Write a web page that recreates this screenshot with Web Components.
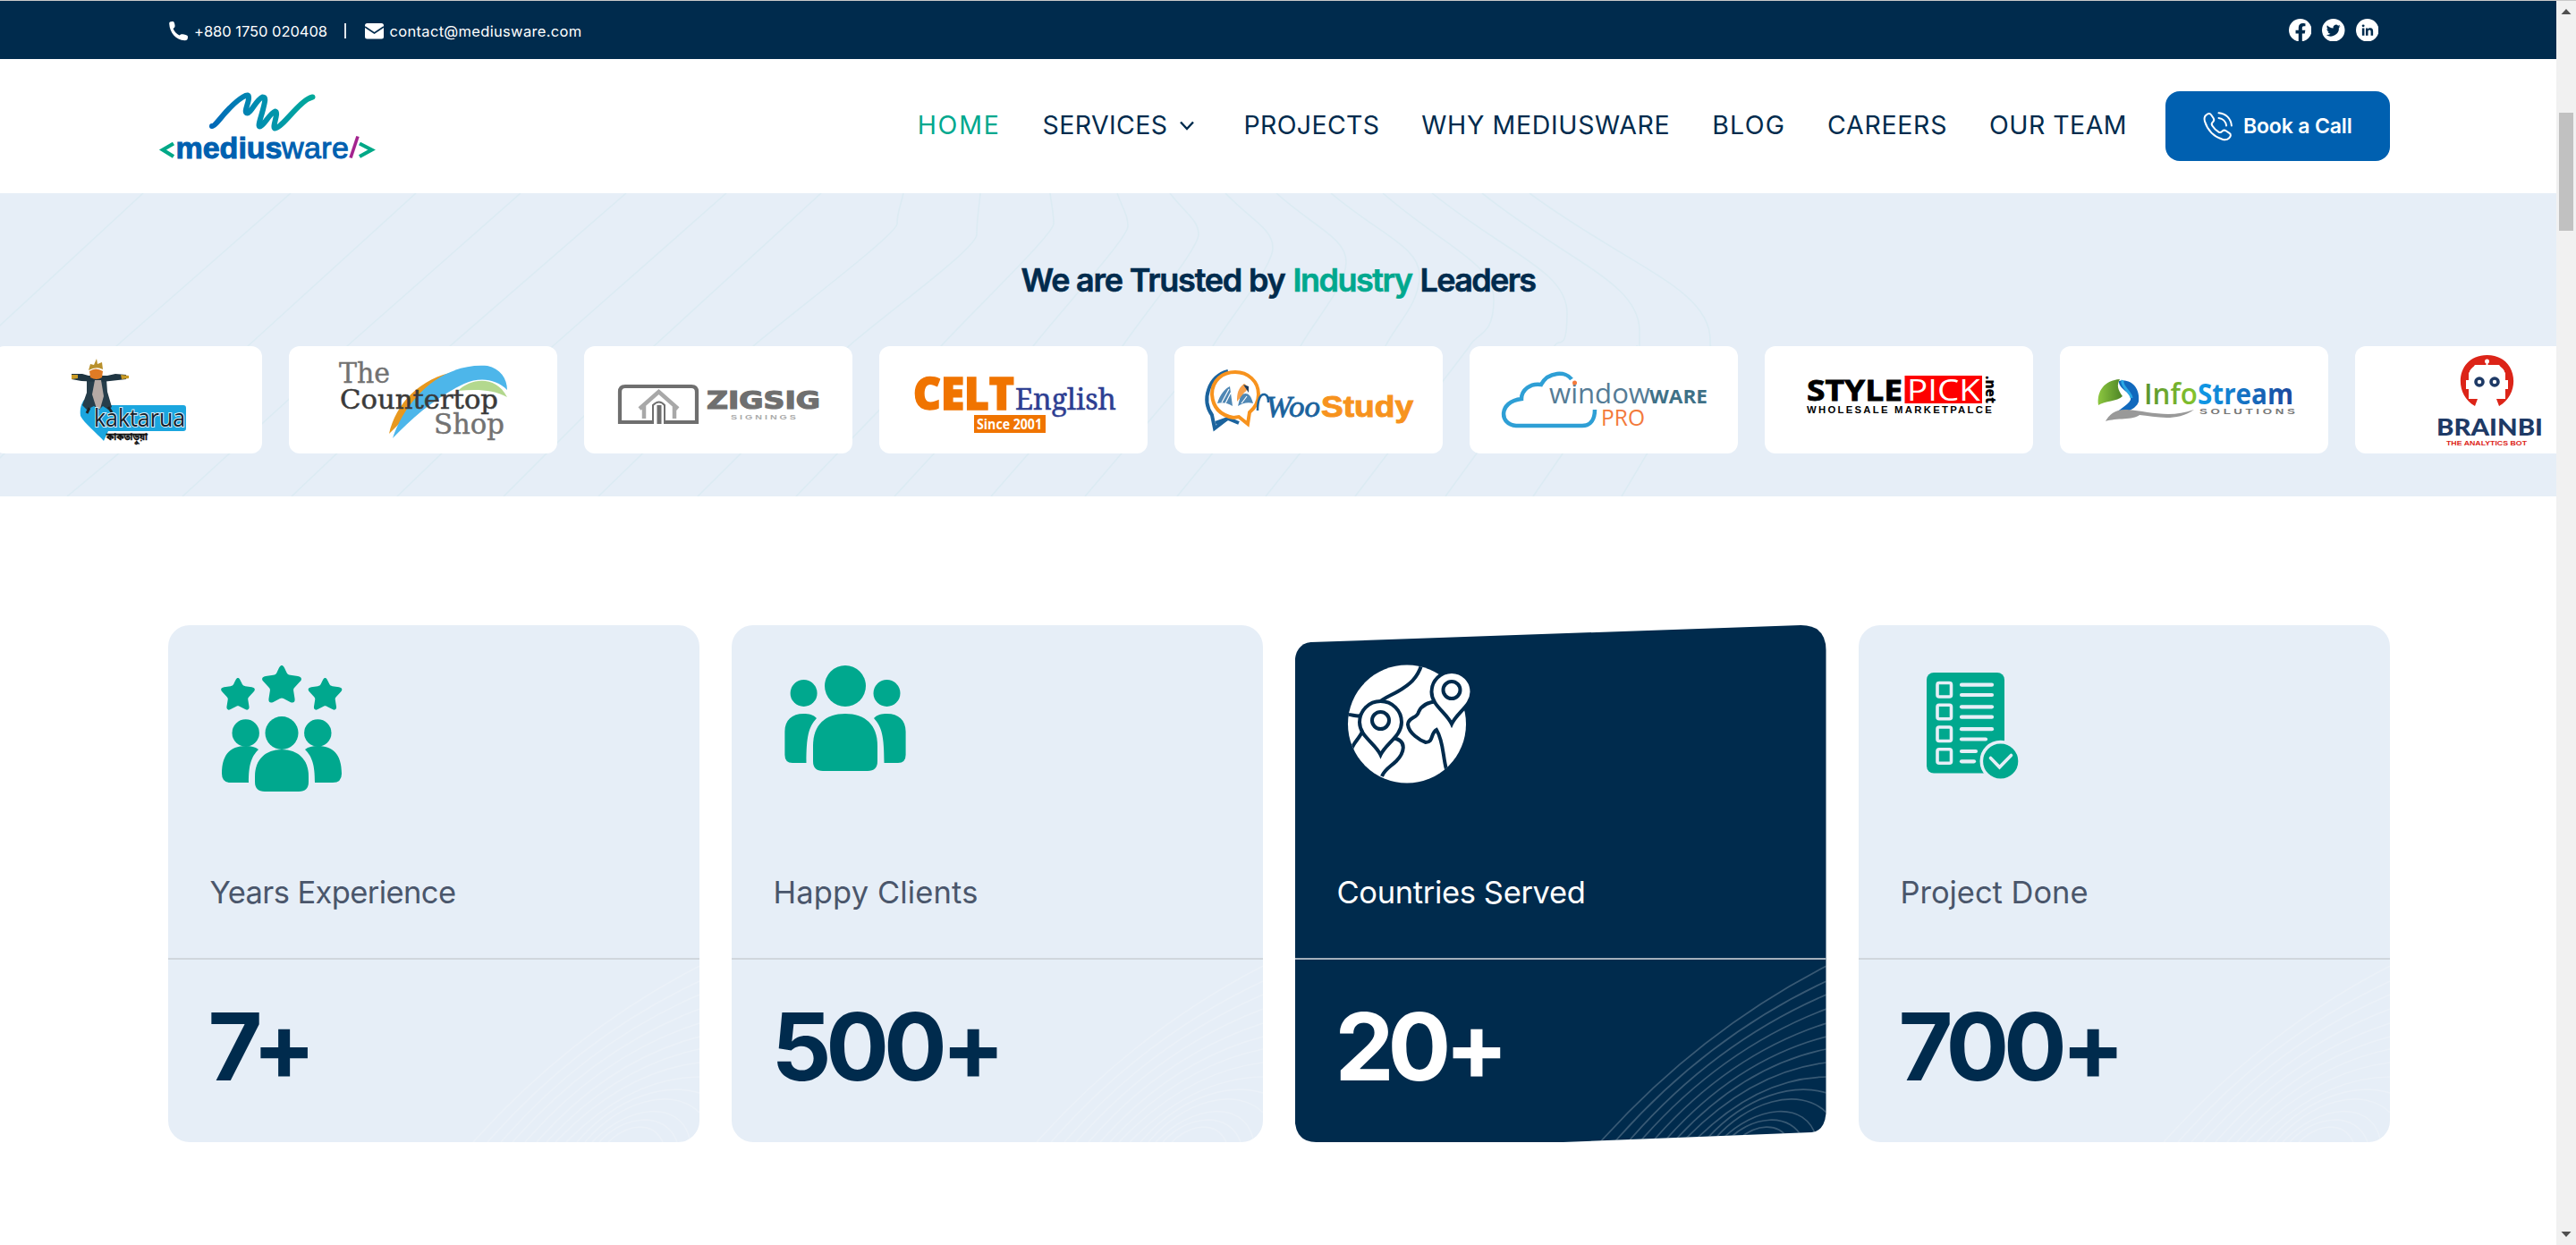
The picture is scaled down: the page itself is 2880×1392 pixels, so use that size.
<!DOCTYPE html>
<html lang="en">
<head>
<meta charset="utf-8">
<title>Mediusware</title>
<style>
html,body{margin:0;background:#fff}
body{width:2880px;height:1392px;overflow:hidden;font-family:Inter,"Liberation Sans",sans-serif;color:#002b4d}
</style>
</head>
<body>
<app-shell>
  <top-bar></top-bar>
  <site-header></site-header>
  <trusted-band></trusted-band>
  <stats-row>
    <stat-card label="Years Experience" label-width="275" value="7+" value-width="109" icon="years"></stat-card>
    <stat-card label="Happy Clients" label-width="229" value="500+" value-width="255" icon="clients"></stat-card>
    <stat-card label="Countries Served" label-width="278" value="20+" value-width="187" icon="globe" active></stat-card>
    <stat-card label="Project Done" label-width="210" value="700+" value-width="247" icon="project"></stat-card>
  </stats-row>
</app-shell>
<script>
const make = (name, html, after) => customElements.define(name, class extends HTMLElement {
  connectedCallback() {
    if (this.shadowRoot) return;
    this.attachShadow({mode: 'open'}).innerHTML = typeof html === 'function' ? html(this) : html;
    if (after) after(this);
  }
});

make('app-shell', `<style>
:host{display:flex;width:2880px;height:1392px;overflow:hidden}
main{width:2858px;flex:none;display:flex;flex-direction:column;overflow:hidden}
</style><main><slot></slot></main><scroll-bar></scroll-bar>`);

make('scroll-bar', `<style>
:host{display:flex;flex-direction:column;align-items:center;width:22px;flex:none;background:#f1f1f1;border-top:1px solid #c9c9c9;box-sizing:border-box}
svg{display:block;flex:none}
.thumb{width:16px;height:132px;background:#c1c1c1;margin-top:103px}
.grow{flex:1}
</style><svg width="22" height="22"><path d="M5.500 15l5.500-6 5.500 6z" fill="#505050"/></svg>
<div class="thumb"></div><div class="grow"></div>
<svg width="22" height="22"><path d="M5.500 7l5.500 6 5.500-6z" fill="#505050"/></svg>`);

make('top-bar', `<style>
:host{display:flex;height:66px;flex:none;box-sizing:border-box;border-top:1px solid #c9c9c9;background:#002b4d;color:#fff;align-items:center;padding:2px 199px 0 188px;font-size:16.5px;line-height:20px}
.sep{width:1.500px;height:17px;background:#dfe5ea;margin:0 21px 0 19px}
.phone{margin-right:6px}.mail{margin-right:7px}
.social{margin-left:auto;display:flex;gap:12px;margin-top:-2px}
svg{display:block;flex:none}
</style>
<svg class="phone" width="23" height="23" viewBox="0 0 23 23"><path d="M1.200 3.500C1 1.300 3 .8 5.300 1c1.100.1 1.500 1 2 3 .6 2.500.4 3.600-1.700 4.900C6.800 12 9 14.600 12.600 16.600c1.800-1.700 2.700-1.700 5.200-1 2.800.7 4 .9 4.200 2.300.2 2.600-.8 4.300-3.500 4.300C8.500 22 1.800 13.500 1.200 3.500z" fill="#fff"/></svg>
<fit-text w="149">+880 1750 020408</fit-text>
<span class="sep"></span>
<svg class="mail" width="21" height="18" viewBox="0 0 21 18"><rect width="21" height="17.500" rx="2.500" fill="#fff"/><path d="M0 4l10.500 7L21 4" fill="none" stroke="#002b4d" stroke-width="1.700"/></svg>
<fit-text w="215">contact@mediusware.com</fit-text>
<div class="social">
<svg width="25.500" height="25.500" viewBox="0 0 26 26"><circle cx="13" cy="13" r="13" fill="#fff"/><path d="M11 26v-9.200H7.700V13H11v-2.900c0-3.300 2-5.100 4.900-5.100 1.400 0 2.900.3 2.900.3v3.200h-1.600c-1.600 0-2.100 1-2.100 2V13h3.600l-.6 3.800h-3V26z" fill="#002b4d"/></svg>
<svg width="25.500" height="25.500" viewBox="0 0 26 26"><circle cx="13" cy="13" r="13" fill="#fff"/><path d="M21 8.300c-.6.3-1.200.4-1.900.5.700-.4 1.200-1 1.400-1.800-.6.400-1.300.6-2.100.8a3.300 3.300 0 0 0-5.600 3C10 10.700 7.600 9.400 6 7.400c-.9 1.500-.4 3.400 1 4.400-.5 0-1-.2-1.500-.4 0 1.600 1.100 3 2.600 3.300-.5.100-1 .1-1.500 0 .4 1.300 1.600 2.200 3.100 2.300A6.600 6.600 0 0 1 4.900 18.400 9.300 9.300 0 0 0 19.300 10.100c.7-.5 1.200-1.100 1.700-1.800z" fill="#002b4d"/></svg>
<svg width="25.500" height="25.500" viewBox="0 0 26 26"><circle cx="13" cy="13" r="13" fill="#fff"/><path d="M7 10.700h2.600V19H7zM11.200 10.700h2.500v1.200c.5-.9 1.400-1.400 2.600-1.400 2.400 0 3.200 1.500 3.200 3.800V19h-2.600v-4.200c0-1.200-.3-2.100-1.500-2.100s-1.600.9-1.600 2.100V19h-2.600z" fill="#002b4d"/><circle cx="8.300" cy="8" r="1.500" fill="#002b4d"/></svg>
</div>`);

make('site-header', `<style>
:host{display:flex;height:150px;flex:none;align-items:center;padding:0 186.500px 0 176px;background:#fff}
nav{display:flex;margin-left:auto;align-items:center;gap:46.900px;font-size:28.500px;line-height:36px;padding-bottom:3px}
.home{color:#00a88e}
.srv{display:flex;align-items:center;gap:12px;padding-right:8px}
svg{display:block;flex:none}
call-button{margin-left:43px}
</style>
<svg width="246" height="90" viewBox="175.500 95.500 246 90">
<defs><linearGradient id="g" x1="236" x2="352" y1="0" y2="0" gradientUnits="userSpaceOnUse"><stop offset="0" stop-color="#0068b8"/><stop offset=".45" stop-color="#008eb0"/><stop offset="1" stop-color="#00aa9a"/></linearGradient></defs>
<path d="M236.500 140.500C241 141 254 118 271 108c5-3 7-3 6.500 2-.5 6-6 16-1.500 16 4 0 10-15 17-18 4 0 3 4 1 12-2 9-7 21-4 21 4 0 11-15 17-17 5 1-4 18 0 19 7 0 26-28 37-33 3-1.500 5-2 5-2" fill="none" stroke="url(#g)" stroke-width="6" stroke-linecap="round" stroke-linejoin="round"/>
<path d="M193.500 160l-12 7 12 7.500M401.500 160l13.500 7-13.500 7.500" fill="none" stroke="#00a887" stroke-width="4.200"/>
<path d="M399.500 152l-8 24" stroke="#a3238e" stroke-width="3.600"/>
<text x="196" y="176" font-family="Liberation Sans" font-size="34" font-weight="700" fill="#0060b0" stroke="#0060b0" stroke-width="1" textLength="119">medius</text>
<text x="314.500" y="176" font-family="Liberation Sans" font-size="34" fill="#0060b0" stroke="#0060b0" stroke-width="1" textLength="75">ware</text>
</svg>
<nav>
<fit-text class="home" w="93">HOME</fit-text>
<span class="srv"><fit-text w="140">SERVICES</fit-text><svg width="18" height="14" viewBox="0 0 18 14"><path d="M2 3.500l7 7.500 7-7.500" fill="none" stroke="#002b4d" stroke-width="2.400"/></svg></span>
<fit-text w="152">PROJECTS</fit-text>
<fit-text w="278">WHY MEDIUSWARE</fit-text>
<fit-text w="82">BLOG</fit-text>
<fit-text w="134">CAREERS</fit-text>
<fit-text w="154">OUR TEAM</fit-text>
</nav>
<call-button>Book a Call</call-button>`);

make('call-button', `<style>
:host{display:flex;width:250.500px;height:78px;flex:none;box-sizing:border-box;border-radius:16px;background:#0060b0;color:#fff;align-items:center;padding:0 0 0 41px;gap:11px;font-size:23px;font-weight:600;line-height:30px}
svg{display:block;flex:none}
fit-text{padding-bottom:1px}
</style><svg width="35" height="35" viewBox="0 0 35 35" fill="none" stroke="#fff" stroke-width="2" stroke-linecap="round" stroke-linejoin="round"><path d="M4.300 4.800C6.300 2.600 8.700 2.200 10 4.300l2.700 4c1 1.700.6 3-.8 4.200-1.600 1.300-1.700 2.200-.6 4 1.900 3 4.300 5.300 7.200 7.100 1.700 1 2.500.8 3.800-.7 1.200-1.500 2.600-1.700 4.300-.7l3.900 2.700c2.200 1.500 1.600 3.600-.5 5.600-1.800 1.800-4 2.300-6.800 1.500C13.500 29 6 21.400 2.900 11.500c-.8-2.700-.3-5 1.400-6.700z"/><path d="M18.500 2.200c8 .6 13.800 6.400 14.400 14.300M18.500 8c4.600.6 8 4 8.600 8.500"/></svg>
<fit-text w="121.500"><slot></slot></fit-text>`);

// Contour line data: top x, bulge x, bulge y, x at y=387, x at y=555
const lines = [[160,0,0,-25,-210],[325,0,0,130,-45],[465,0,0,277,75],[582,0,0,388,204],[700,0,0,503,326],[812,0,0,618,444],[918,0,0,731,563],
[1010,1003,250,842,669],[1096,1092,262,949,780],[1174,1178,250,1052,890],[1249,1261,253,1155,1000],[1308,1340,262,1255,1108],[1370,1423,277,1356,1213],
[1427,1505,293,1454,1316],[1488,1587,308,1549,1415],[1546,1670,335,1643,1515],[1601,1752,350,1738,1616],[1657,1833,370,1830,1714],[1710,1912,380,1913,1813]];
const contours = lines.map(([t,bx,by,m,e]) => bx
  ? `M${t} 216C${t+(bx-t)*.55} ${216+(by-216)*.5} ${bx} ${by-(by-216)*.35} ${bx} ${by}S${m+(bx-m)*.3} ${387-(387-by)*.3} ${m} 387L${e} 555`
  : `M${t} 216L${m} 387L${e} 555`).join('');

make('trusted-band', `<style>
:host{display:grid;height:339px;flex:none;background:#e6eef7;overflow:hidden}
.bg,.content{grid-area:1/1;min-width:0}
.bg{display:block}
.content{display:flex;flex-direction:column;align-items:center}
h2{margin:73px 0 0;font-size:36px;line-height:48px;font-weight:600;display:flex;gap:9px;-webkit-text-stroke:.6px}
h2 .g{color:#00a88e}
.track{display:flex;gap:30px;width:2858px;margin-top:50px;overflow:hidden}
.track logo-tile:first-child{margin-left:-7px}
</style>
<svg class="bg" width="2858" height="339" viewBox="0 216 2858 339"><path d="${contours}" fill="none" stroke="#dcebf3" stroke-width="1.600"/></svg>
<div class="content">
<h2><fit-text w="295">We are Trusted by</fit-text><fit-text class="g" w="133">Industry</fit-text><fit-text w="129">Leaders</fit-text></h2>
<div class="track">${['kaktarua','countertop','zigsig','celt','woo','windoware','stylepick','infostream','brainbi'].map(n=>`<logo-tile name="${n}"></logo-tile>`).join('')}</div>
</div>`);

const T = (x,y,w,size,fill,text,extra='') => `<text x="${x}" y="${y}" textLength="${w}" lengthAdjust="spacingAndGlyphs" font-size="${size}" fill="${fill}" ${extra}>${text}</text>`;
const logos = {
kaktarua: `<path d="M101 60c4 3 14 6 28 6h83q3 0 3 3v23q0 3-3 3h-84l-5 11c-7-8-22-20-26-28-1-8 1-14 4-18z" fill="#1ba6df"/>
<path d="M104 37h22l1 14 5 17-4 3-6-4-4 4-6-4-8 4-5-5 5-14z" fill="#263d4a"/><path d="M87 31h12l7 2h21l9-2 12 1v5l-18 2-10 1-22-1-11-2z" fill="#1f3542"/><path d="M87 32h7v4l-7 1zM142 32l9 1v3l-8 1z" fill="#c99a25"/><path d="M113 38h7l3 18-4 14h-4l-5-16z" fill="#b5aaa5"/><path d="M107 28q7-5 15 0l-1 7q-6 4-13 0z" fill="#e07b25"/><path d="M106 27l2-7 4 1 3-7 1 6 5-2 1 8q-7-4-16 1z" fill="#b8902c"/><path d="M107 69l-3 6M128 68l4 6" stroke="#222" stroke-width="3"/>
${T(112,90,102,27,'#14202b','kaktarua','font-family="Open Sans" font-weight="500" stroke="#d8eef8" stroke-width="2" paint-order="stroke"')}
${T(126,105,46,11.5,'#111','কাকতাড়ুয়া','font-weight="700" font-family="Noto Sans Bengali,Noto Sans,sans-serif" stroke="#111" stroke-width=".4"')}`,
countertop: `<path d="M112 98C120 62 150 32 195 27 162 45 138 72 112 98z" fill="#e8981e"/><path d="M116 103C130 60 170 18 222 22c14 3 22 14 22 27-12-12-30-15-48-7-30 14-58 38-80 61z" fill="#4db6ea"/><path d="M189 50c14-14 42-18 55 7-16-9-36-9-55-7z" fill="#b3d88e"/>
${T(56,41,57,31,'#727272','The','font-family="DejaVu Serif Condensed,DejaVu Serif" stroke="#727272" stroke-width=".4"')}${T(57,70,177,30,'#3a3a3a','Countertop','font-family="DejaVu Serif Condensed,DejaVu Serif" stroke="#3a3a3a" stroke-width=".5"')}${T(162,98,79,31,'#727272','Shop','font-family="DejaVu Serif Condensed,DejaVu Serif" stroke="#727272" stroke-width=".4"')}`,
zigsig: `<path d="M76 85H40V51q0-6 6-6h74q6 0 6 6v34H91" fill="none" stroke="#6f6f6f" stroke-width="4.200"/><path d="M84 87V66" stroke="#6f6f6f" stroke-width="5"/><path d="M77 87V66q7-7 13 0v21" fill="none" stroke="#6f6f6f" stroke-width="2"/><path d="M62 70l21.500-19L105 70M67 66v15M101 66v15" fill="none" stroke="#a8a8a8" stroke-width="4.500"/>
${T(137,70,127,26,'#6f6f6f','ZIGSIG','font-family="DejaVu Sans" font-weight="700" stroke="#6f6f6f" stroke-width="1.200"')}${T(164,82,73,8,'#aaa','S I G N I N G S','font-family="Liberation Sans" font-weight="700"')}`,
celt: `${T(38,70.500,113,49,'#f07400','CELT','font-family="Open Sans" font-weight="800" stroke="#f07400" stroke-width="1.500"')}${T(152,71,113,32,'#2d3e92','English','font-family="Noto Serif,DejaVu Serif,Liberation Serif" stroke="#2d3e92" stroke-width=".5"')}<rect x="106" y="77" width="80" height="20" fill="#f07400"/>${T(109,93,73,16,'#fff','Since 2001','font-family="Open Sans" font-weight="700"')}`,
woo: `<path d="M60 28C38 34 30 60 42 77L45 92 58 82" fill="none" stroke="#1b639d" stroke-width="4"/><path d="M46 86l14-5 12 5" fill="none" stroke="#1b639d" stroke-width="4"/><path d="M66 80C50 77 43 68 42 54 42 38 54 29 68 29S94 39 94 54c0 9-4 15-10 20l-2 13-10-8z" fill="none" stroke="#f7931e" stroke-width="4"/><path d="M48 64c6-2 12 0 17 3l-3-22c-6 3-11 9-14 19zM88 64c-6-2-12 0-17 3l3-12c6-4 11-3 14 9z" fill="#4f87b4"/><path d="M53 63l8-15M57 64l6-12M75 64l6-8" stroke="#fff" stroke-width="1.200"/><path d="M70 62c0-9 1-15 8-20 5 2 4 8 0 10z" fill="#f7a04a"/><path d="M77 43l6 2v7z" fill="#1d3b5c"/><path d="M93 72c0-12 3-19 8-18 4 1 4 5 4 9" fill="none" stroke="#1b639d" stroke-width="2.500"/>
${T(102,79,61,34,'#1b639d','Woo','font-family="Liberation Serif" font-style="italic" stroke="#1b639d" stroke-width=".8"')}${T(164,79,103,33,'#f7931e','Study','font-family="Liberation Sans" font-weight="700" stroke="#f7931e" stroke-width="1"')}`,
windoware: `<path d="M114 37C108 28 88 28 80 43c-12-2-22 6-22 16C32 62 33 88 52 89h74c10 0 14-8 14-18" fill="none" stroke="#2e9fd5" stroke-width="4.500"/>
${T(89,64,113,31,'#557c96','window','font-family="Open Sans" font-weight="400"')}${T(201,64,65,22,'#3f7187','WARE','font-family="Open Sans" font-weight="700"')}<circle cx="117.500" cy="41" r="2.500" fill="#f37a3b"/>${T(147,89,49,25,'#f37a3b','PRO','font-family="Open Sans"')}`,
stylepick: `<rect x="156.500" y="33" width="86.500" height="31" fill="#fe0000"/>${T(47,61,107,33,'#000','STYLE','font-family="Open Sans" font-weight="700" stroke="#000" stroke-width=".8"')}${T(159,61,82,33,'#fff','PICK','font-family="Open Sans"  font-weight="400"')}<g transform="translate(247 33) rotate(90)">${T(0,0,31,16,'#000','.net','font-family="Open Sans" font-weight="800"')}</g>${T(47,75,209,10,'#000','WHOLESALE MARKETPALCE','style="letter-spacing:2px" font-family="Liberation Sans" font-weight="700"')}`,
infostream: `<defs><linearGradient id="s"><stop offset="0" stop-color="#0f9be8"/><stop offset="1" stop-color="#1c479c"/></linearGradient><linearGradient id="l"><stop offset="0" stop-color="#8cc63f"/><stop offset="1" stop-color="#4c8426"/></linearGradient><linearGradient id="i"><stop offset="0" stop-color="#5a9430"/><stop offset="1" stop-color="#86c52d"/></linearGradient></defs>
<path d="M43 66C41 50 50 38 67 37c-4 7-2 12 3 19-6 6-20 5-27 10z" fill="url(#l)"/><path d="M66 39c14-3 24 8 22 23-3 10-18 12-28 18 3-9 16-13 19-20 2-8-14-12-13-21z" fill="#1169bd"/><path d="M70 38c-2 7 10 14 10 20" stroke="#2aa8e4" stroke-width="3" fill="none"/><path d="M51 84c4-8 12-14 24-13 24 2 48 10 75 0-22 15-44 7-61 6-7 6-26 3-38 7z" fill="#999"/>
${T(94,65,60,32,'url(#i)','Info','font-family="Open Sans" font-weight="600"')}${T(154,65,107,32,'url(#s)','Stream','font-family="Open Sans" font-weight="700"')}${T(156,76,107,9.5,'#777','S O L U T I O N S','font-family="Liberation Sans" font-weight="700"')}`,
brainbi: `<path d="M134 67C108 52 114 10 147.500 10S187 52 161 67l-3-8h10V30l-7-9h-27l-7 9v29h10z" fill="#dc2418"/><path d="M147.500 21v-5" stroke="#fff" stroke-width="2"/><circle cx="147.500" cy="17" r="2.500" fill="#fff"/><path d="M128 28q3-6 9-6h21q6 0 9 6v10h4v10h-4v7q-3 4-8 4h-4v4h-15v-4h-4q-5 0-8-4v-7h-4V38h4z" fill="#fff"/><circle cx="139" cy="40" r="4" fill="#fff" stroke="#1e3a66" stroke-width="3.600"/><circle cx="156" cy="40" r="4" fill="#fff" stroke="#1e3a66" stroke-width="3.600"/>
${T(91,100,119,27,'#1e3a66','BRAINBI','font-family="Lato" font-weight="900"')}${T(102,111,90,8,'#dc2418','THE ANALYTICS BOT','font-family="Liberation Sans" font-weight="700"')}`
};
make('logo-tile', el => `<style>
:host{display:block;width:300px;height:120px;flex:none;background:#fff;border-radius:12px;overflow:hidden}
svg{display:block}
</style><svg width="300" height="120" viewBox="0 0 300 120">${logos[el.getAttribute('name')]}</svg>`);

make('stats-row', `<style>
:host{display:flex;gap:36px;padding:144px 0 0 187.500px}
</style><slot></slot>`);

const star = (x,y,s) => `<path transform="translate(${x} ${y}) scale(${s})" d="M0-21c1.800 0 2.800 2 5.500 8 1 1.800 2 2.400 4 2.700l8.500 1.300c4.300.9 5 3.400 2.400 6.100L14.500 3.500c-1.400 1.500-1.600 2.500-1.300 4.300l1.300 8.200c.6 4-1.500 5.500-5 3.900L2 16c-1.500-.7-2.500-.7-4 0l-7.500 3.900c-3.500 1.600-5.600.1-5-3.900l1.300-8.200c.3-1.800.1-2.800-1.300-4.300l-5.900-6.400C-23-5.600-22.300-8.100-18-9l8.500-1.300c2-.3 3-.9 4-2.700 2.700-6 3.700-8 5.500-8z"/>`;
const icons = {
years: ['188 699', `<g fill="#00a88e">${star(315,765,1)}${star(266,776,.86)}${star(363.500,776,.86)}
<circle cx="315" cy="819.500" r="18.500"/><circle cx="274.700" cy="819.500" r="15.200"/><circle cx="355.300" cy="819.500" r="15.200"/>
<path d="M285 868c0-19 12-30 30-30s30 11 30 30v6q0 11-11 11h-38q-11 0-11-11z"/>
<path d="M289 838c-8 8-11 17-11 37h-20q-10 0-10-10c0-22 10-31 27-31 6 0 10 1 14 4z"/><path d="M341 838c8 8 11 17 11 37h20q10 0 10-10c0-22-10-31-27-31-6 0-10 1-14 4z"/></g>`],
clients: ['818 699', `<g fill="#00a88e"><circle cx="945" cy="767" r="23"/><circle cx="898.600" cy="775" r="15"/><circle cx="991.500" cy="775" r="15"/>
<path d="M909 834c0-24 14-36 36-36s36 12 36 36v17q0 11-11 11h-50q-11 0-11-11z"/>
<path d="M913 803c-9 10-11.500 20-11.500 50H886q-8.600 0-8.600-9v-26c0-13 8-20 21-20 6 0 11 1 14.600 5z"/><path d="M977 803c9 10 11.500 20 11.500 50H1004q8.600 0 8.600-9v-26c0-13-8-20-21-20-6 0-11 1-14.600 5z"/></g>`],
globe: ['1448 699', `<defs><clipPath id="c"><circle cx="1573" cy="809.500" r="66"/></clipPath></defs><circle cx="1573" cy="809.500" r="66" fill="#fff"/>
<g clip-path="url(#c)" fill="none" stroke="#002b4d" stroke-width="4"><path d="M1590 741c-5 18-15 25-27 32-9 5-18 8-23 14M1505 799c6-1 11 3 17 1M1524 816c-4 10-11 14-13 22M1557 825c18 3 12 18 4 26-6 6-13 9-16 17M1607 784c-11 1-18 5-21 12-1 7-12 6-12 14 1 10 14 18 20 20 9 0 5-10 12-14 8 13 7 30 11 44"/></g>
<g fill="#fff" stroke="#002b4d" stroke-width="4"><path d="M1623 809.500c-6-13-22.500-21-22.500-36a22.500 22.500 0 0 1 45 0c0 15-16.500 23-22.500 36z"/><path d="M1543.500 844c-6-13-23.500-21-23.500-36.500a23.500 23.500 0 0 1 47 0c0 15.500-17.500 23.500-23.500 36.500z"/><circle cx="1623" cy="771.500" r="9.500"/><circle cx="1543.500" cy="805.500" r="9.500"/></g>`],
project: ['2078 699', `<rect x="2154" y="752" width="87" height="112.500" rx="8" fill="#00a88e"/><g fill="none" stroke="#e6eef7" stroke-width="3.600">${[763.5,788.2,813,837.8].map(y=>`<rect x="2166" y="${y}" width="15.500" height="15.500" rx="2"/>`).join('')}</g>
<g stroke="#e6eef7" stroke-width="4.200" stroke-linecap="round">${[[765.7,2227],[777,2227],[790.3,2227],[801.7,2227],[815.2,2227],[826.5,2220],[840,2209],[851.3,2207]].map(([y,x])=>`<path d="M2193 ${y}H${x}"/>`).join('')}</g>
<circle cx="2236.700" cy="851" r="21.400" fill="#00a88e" stroke="#e6eef7" stroke-width="3.600"/><path d="M2225.500 847.500l10 10.300 13-13.300" fill="none" stroke="#e6eef7" stroke-width="3.600" stroke-linecap="round"/>`]
};
const sx=[17,33,48,61,75,88,99,109,121], ey=[7,24,39,55,71,86,100,115,131];
const waves = sx.map((x,i)=>`M${x} 204Q${128+i*8} ${80+i*6.5} 270 ${ey[i]}`).join('')
 +'M133 204C180 150 235 138 270 149M142 204C180 158 240 141 270 171M150 204C190 162 248 156 259 200M158 204C184 174 232 168 245 204M168 204C190 183 218 180 229 204';
make('stat-card', el => {
  const on = el.hasAttribute('active'), [o, art] = icons[el.getAttribute('icon')];
  return `<style>
:host{display:flex;flex-direction:column;width:594px;height:578px;flex:none;overflow:hidden;background:${on?'#002b4d':'#e6eef7'};${on?"clip-path:path('M0 44Q0 21 18 19L566 0Q594 0 594 28V546Q592 566 578 567L300 578H24Q0 578 0 550Z')":'border-radius:24px'}}
svg{display:block}
.top{height:372px;border-bottom:2px solid ${on?'#a3afbb':'#d0d6dd'}}
.label{display:block;margin:38.500px 0 0 47px;font-size:34.500px;line-height:40px;color:${on?'#fff':'#4a566b'}}
.bottom{display:flex;justify-content:space-between;height:204px}
.num{margin:47px 0 0 45px;font-size:105px;line-height:100px;font-weight:700;color:${on?'#fff':'#002b4d'}}
</style>
<div class="top"><svg width="300" height="240" viewBox="${o} 300 240">${art}</svg><fit-text class="label" w="${el.getAttribute('label-width')}">${el.getAttribute('label')}</fit-text></div>
<div class="bottom"><fit-text class="num" w="${el.getAttribute('value-width')}">${el.getAttribute('value')}</fit-text>
<svg width="270" height="204" viewBox="0 0 270 204"><path d="${waves}" fill="none" stroke="#fff" stroke-opacity="${on?.22:.2}" stroke-width="1.700"/></svg></div>`;
});

// Text set to a fixed measure by distributing letter spacing
make('fit-text', `<style>:host{display:block;white-space:nowrap;flex:none}span{display:inline-block}</style><span><slot></slot></span>`, el => {
  const s = el.shadowRoot.querySelector('span'), w = +el.getAttribute('w');
  const slot = el.querySelector('slot');
  const n = (slot ? slot.assignedNodes().map(x=>x.textContent).join('') : el.textContent).length;
  s.style.letterSpacing = (w - s.getBoundingClientRect().width) / n + 'px';
  el.style.width = w + 'px';
});
</script>
</body>
</html>
